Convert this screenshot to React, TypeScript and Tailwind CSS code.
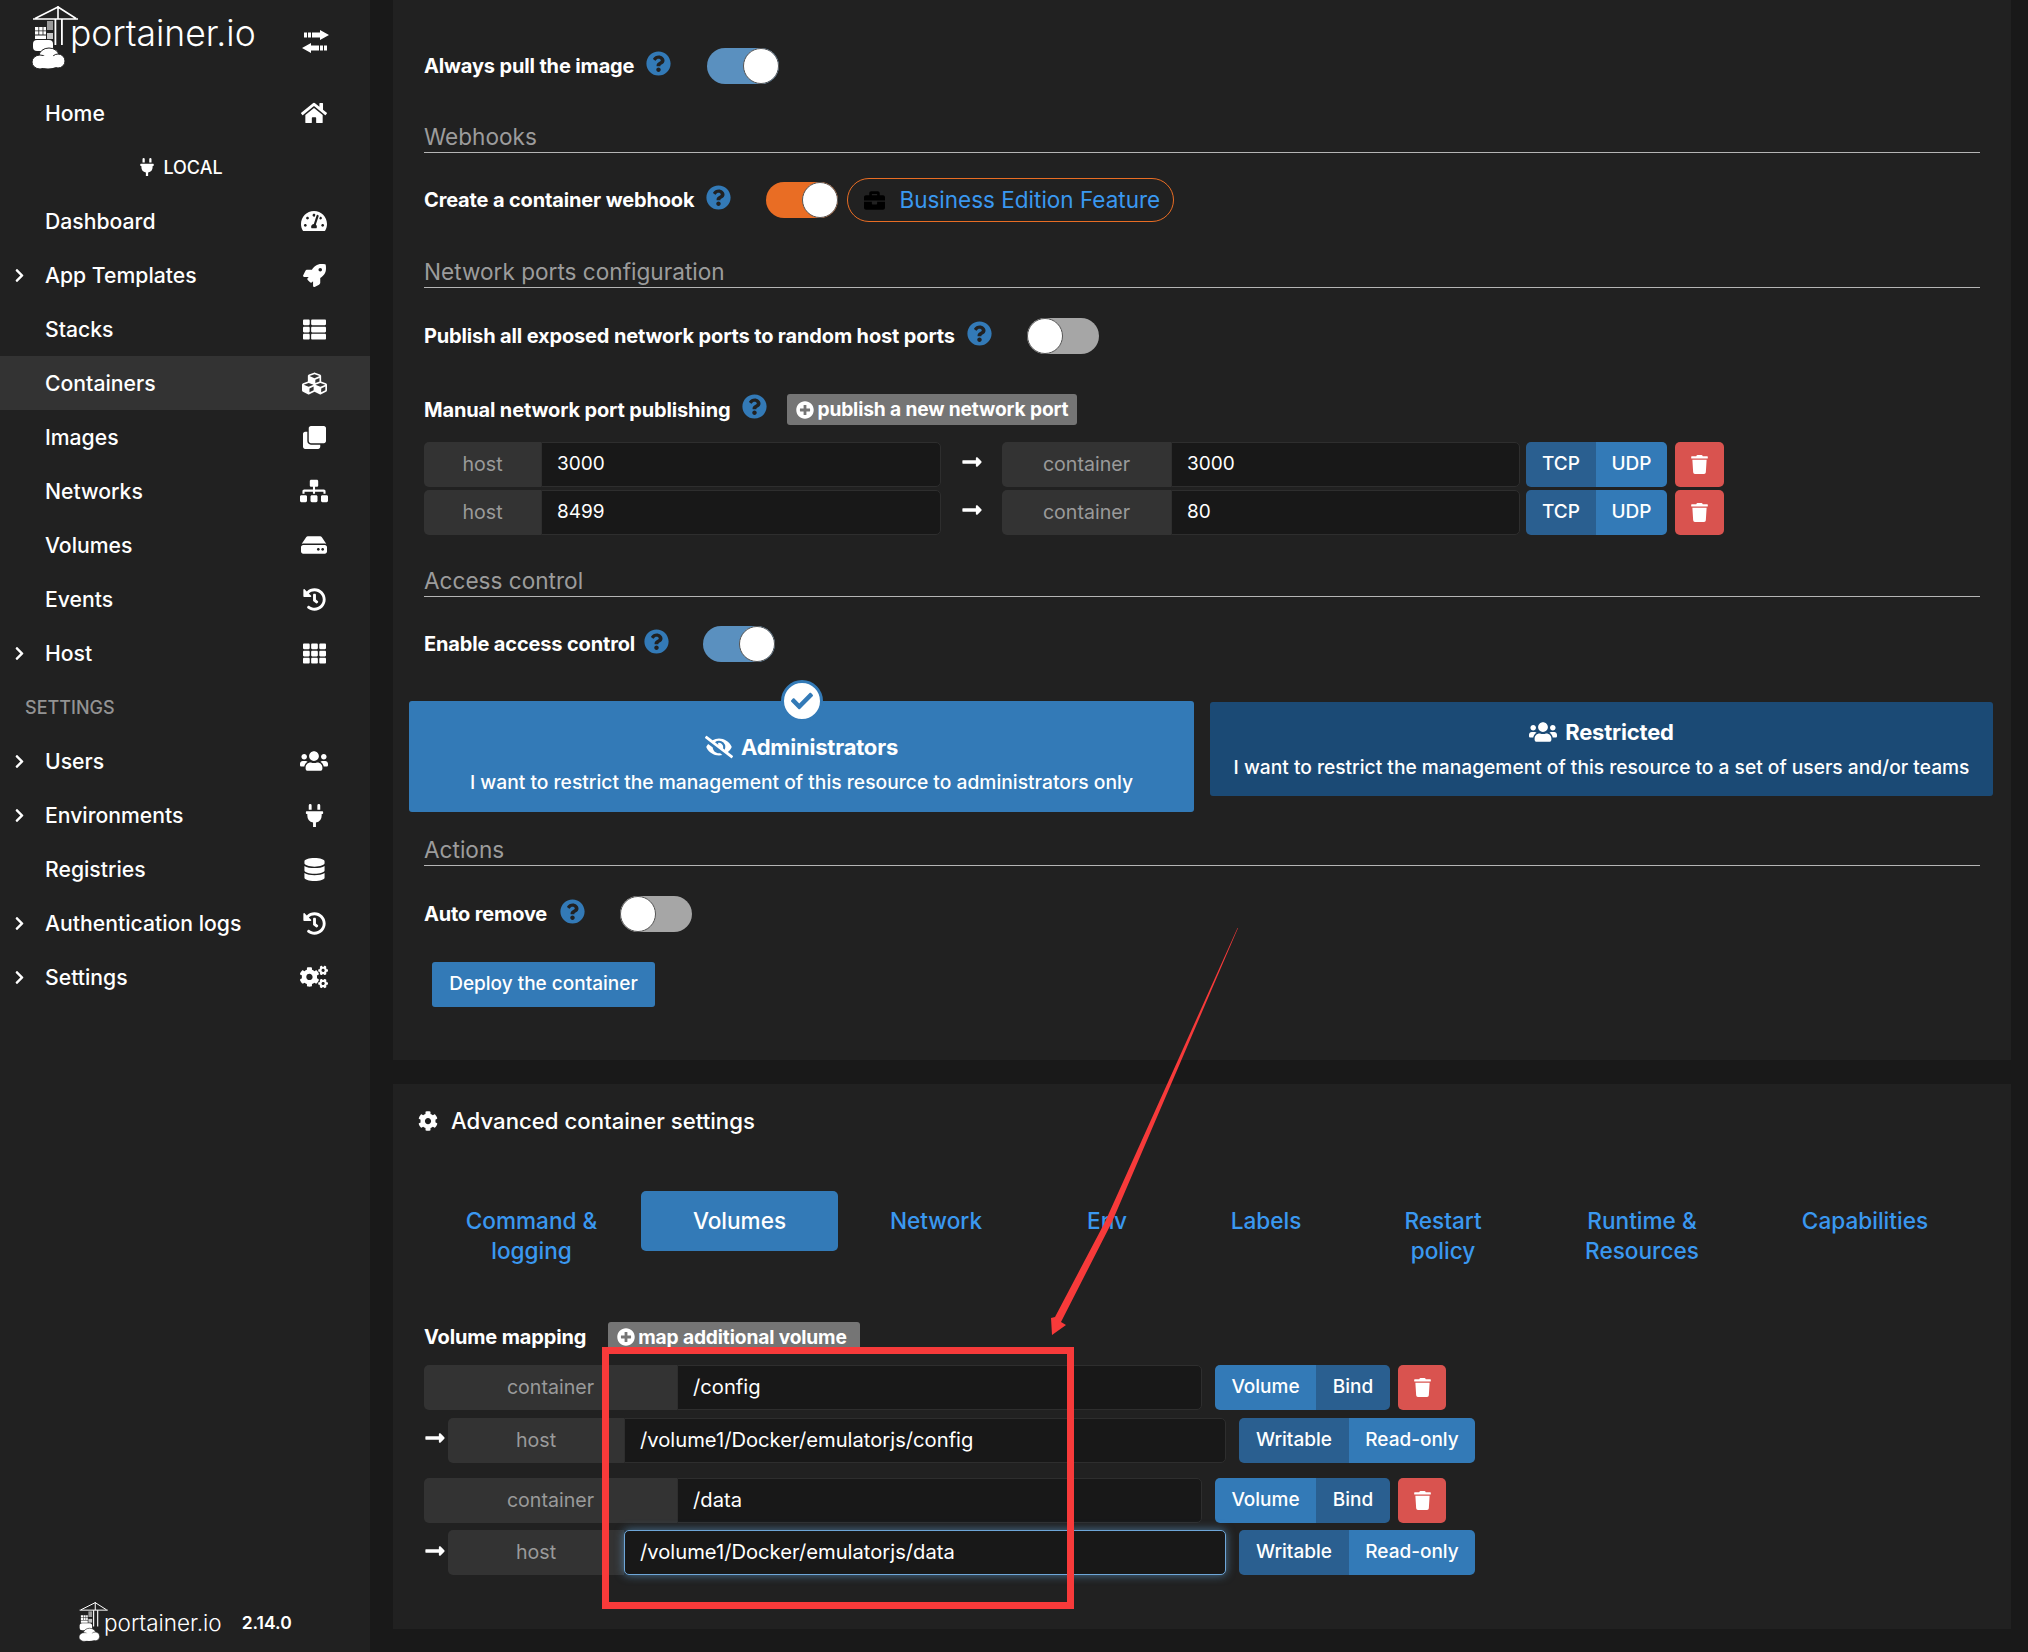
import type { ReactNode } from "react";
import {
  FaBriefcase, FaCheck, FaChevronRight, FaClone, FaCog, FaCogs, FaCubes, FaDatabase, FaEyeSlash,
  FaHdd, FaHistory, FaHome, FaLongArrowAltRight, FaPlug, FaPlusCircle, FaQuestionCircle, FaRocket, FaSitemap,
  FaTachometerAlt, FaTh, FaThList, FaTrash, FaUsers,
} from "react-icons/fa";

type NavItem = { label: string; icon: ReactNode; arrow?: boolean; active?: boolean };

const top: NavItem[] = [
  { label: "Dashboard", icon: <FaTachometerAlt className="text-[26px]" /> },
  { label: "App Templates", icon: <FaRocket />, arrow: true },
  { label: "Stacks", icon: <FaThList /> },
  { label: "Containers", icon: <FaCubes className="text-[25px]" />, active: true },
  { label: "Images", icon: <FaClone /> },
  { label: "Networks", icon: <FaSitemap className="text-[28px]" /> },
  { label: "Volumes", icon: <FaHdd className="text-[26px]" /> },
  { label: "Events", icon: <FaHistory /> },
  { label: "Host", icon: <FaTh />, arrow: true },
];
const bottom: NavItem[] = [
  { label: "Users", icon: <FaUsers className="text-[28px]" />, arrow: true },
  { label: "Environments", icon: <FaPlug />, arrow: true },
  { label: "Registries", icon: <FaDatabase /> },
  { label: "Authentication logs", icon: <FaHistory />, arrow: true },
  { label: "Settings", icon: <FaCogs className="text-[28px]" />, arrow: true },
];

const tabs = [
  { label: "Command & logging", w: "w-[215px]" },
  { label: "Volumes", w: "w-[197px]", active: true },
  { label: "Network", w: "w-[192px]" },
  { label: "Env", w: "w-[146px]" },
  { label: "Labels", w: "w-[168px]" },
  { label: "Restart policy", w: "w-[182px]" },
  { label: "Runtime & Resources", w: "w-[212px]" },
  { label: "Capabilities", w: "w-[230px]" },
];

const bold = "text-[20px] font-bold text-white tracking-[-0.15px]";
const small = "text-[19.2px] font-bold text-white tracking-[-0.15px] whitespace-nowrap";
const addon = "flex items-center justify-center bg-[#333333] text-[#9a9a9a] text-[19.6px] rounded-l-[5px]";
const input = "flex items-center bg-[#181818] border border-[#2e2e2e] rounded-r-[5px] text-white";
const btn = "flex items-center justify-center text-white text-[19px] font-medium";
const dark = "bg-[#2a5f90]";
const blue = "bg-[#337ab7]";

const Logo = ({ className }: { className: string }) => (
  <svg viewBox="0 0 48 64" className={className} fill="#fff">
    <path d="M26 0v13M1 13h45M26 1L3 12.5M26 1l18 11.5" stroke="#fff" strokeWidth="1.6" fill="none" />
    <path d="M22.5 13h1.8v26h-1.8zM29 13h1.8v26H29z" />
    <path d="M15 15h6v9h-6z" opacity=".55" />
    <path d="M3 21h3.4v3.4H3zM7.2 21h3.4v3.4H7.2zM11.4 21h2.6v3.4h-2.6zM3 25.2h3.4v3.4H3zM7.2 25.2h3.4v3.4H7.2zM11.4 25.2h2.6v3.4h-2.6zM3 29.4h11V33H3z" />
    <path d="M15 27h6v6h-6z" opacity=".75" />
    <rect x="1" y="34" width="20" height="11" rx="4" />
    <g stroke="#212121" strokeWidth="1">
      <ellipse cx="17" cy="50" rx="10" ry="8" />
      <ellipse cx="8" cy="56" rx="8" ry="7" />
      <ellipse cx="26" cy="55" rx="7" ry="7" />
    </g>
    <ellipse cx="16" cy="56" rx="13" ry="6.5" />
  </svg>
);

const Exchange = () => (
  <svg viewBox="0 0 27 23" className="w-[27px] h-[23px] ml-auto mr-[41px] mt-[24px]" fill="#fff">
    <path d="M18 0l9 5-9 5zM10 2.5h8v5h-8zM6 2.5h3v5H6zM2 2.5h3v5H2z" />
    <path d="M9 13l-9 5 9 5zM9 15.5h8v5H9zM18 15.5h3v5h-3zM22 15.5h3v5h-3z" />
  </svg>
);

const Help = () => <FaQuestionCircle className="text-[#337ab7] text-[25px] -mt-[6px]" />;

const Toggle = ({ on, tone = "bg-[#5a90bf]" }: { on?: boolean; tone?: string }) => (
  <div className={`flex w-[72px] h-[36px] rounded-full ${on ? `justify-end ${tone}` : "justify-start bg-[#a6a6a6]"}`}>
    <div className="w-[36px] h-[36px] rounded-full bg-white border border-[#555]" />
  </div>
);

const Section = ({ title, className }: { title: string; className: string }) => (
  <div className={`h-[33px] border-b border-[#b5b5b5] text-[#9c9c9c] text-[22.6px] leading-[33px] ${className}`}>{title}</div>
);

const Nav = ({ item }: { item: NavItem }) => (
  <div className={`flex items-center h-[54px] text-white text-[21.2px] font-medium ${item.active ? "bg-[#333333]" : ""}`}>
    <span className="w-[45px] pl-[12px] text-[15px]">{item.arrow && <FaChevronRight />}</span>
    <span className="flex-1 pt-[1px]">{item.label}</span>
    <span className="w-[40px] mr-[36px] flex justify-center text-[23px]">{item.icon}</span>
  </div>
);

const Trash = ({ className }: { className: string }) => (
  <div className={`${btn} bg-[#d9534f] rounded-[5px] text-[19px] ${className}`}><FaTrash /></div>
);

const Port = () => (
  <div className={`${btn} ml-[6px] rounded-[5px] overflow-hidden w-[141px] h-[45px]`}>
    <span className={`${dark} w-[70px] h-full flex items-center justify-center`}>TCP</span>
    <span className={`${blue} w-[71px] h-full flex items-center justify-center`}>UDP</span>
  </div>
);

const PortRow = ({ host, container, className }: { host: string; container: string; className?: string }) => (
  <div className={`flex h-[45px] ${className ?? ""}`}>
    <div className={`${addon} w-[117px]`}>host</div>
    <div className={`${input} w-[400px] pl-[15px] text-[19px]`}>{host}</div>
    <div className="w-[61px] flex justify-center pt-[9px] text-white text-[22px]"><FaLongArrowAltRight /></div>
    <div className={`${addon} w-[169px]`}>container</div>
    <div className={`${input} w-[349px] pl-[15px] text-[19px]`}>{container}</div>
    <Port />
    <Trash className="w-[49px] ml-[8px] h-[45px]" />
  </div>
);

const VolumeRows = ({ path, host, focus, className }: { path: string; host: string; focus?: boolean; className?: string }) => (
  <div className={className}>
    <div className="flex h-[45px]">
      <div className={`${addon} w-[253px]`}>container</div>
      <div className={`${input} w-[525px] pl-[15px] text-[20.2px]`}>{path}</div>
      <div className={`${btn} ml-[13px] rounded-[5px] overflow-hidden h-[45px]`}>
        <span className={`${blue} w-[101px] h-full flex items-center justify-center`}>Volume</span>
        <span className={`${dark} w-[74px] h-full flex items-center justify-center`}>Bind</span>
      </div>
      <Trash className="w-[48px] ml-[8px] h-[45px]" />
    </div>
    <div className={`flex h-[45px] ${focus ? "mt-[7px]" : "mt-[8px]"}`}>
      <div className={`w-[24px] flex text-white text-[22px] ${focus ? "pt-[10px]" : "pt-[9px]"}`}><FaLongArrowAltRight /></div>
      <div className={`${addon} w-[176px]`}>host</div>
      <div
        className={`${input} w-[602px] pl-[15px] text-[20.2px] ${focus ? "border-[#6ea6d8] rounded-[5px] shadow-[0_0_10px_rgba(102,175,233,0.6)]" : ""}`}
      >
        {host}
      </div>
      <div className={`${btn} ml-[13px] rounded-[5px] overflow-hidden h-[45px]`}>
        <span className={`${dark} w-[110px] h-full flex items-center justify-center`}>Writable</span>
        <span className={`${blue} w-[126px] h-full flex items-center justify-center`}>Read-only</span>
      </div>
    </div>
  </div>
);

export default function App() {
  return (
    <div className="relative flex w-[2028px] h-[1652px] overflow-hidden bg-[#191919] [font-family:Inter,sans-serif]">
      <aside className="flex flex-col shrink-0 w-[370px] h-full bg-[#212121]">
        <div className="flex h-[86px] pl-[32px] pt-[6px]">
          <Logo className="w-[48px] h-[64px]" />
          <span className="-ml-[10px] mt-[8px] h-[40px] leading-[40px] text-white text-[35.5px] font-light">portainer.io</span>
          <Exchange />
        </div>
        <Nav item={{ label: "Home", icon: <FaHome className="text-[26px]" /> }} />
        <div className="flex items-center justify-center h-[54px] pr-[9px] gap-[7px] text-white text-[18px] font-medium">
          <FaPlug className="text-[18px]" />
          <span>LOCAL</span>
        </div>
        {top.map((n) => <Nav key={n.label} item={n} />)}
        <div className="flex items-center h-[54px] pl-[25px] text-[#939393] text-[18px] font-medium">SETTINGS</div>
        {bottom.map((n) => <Nav key={n.label} item={n} />)}
        <div className="mt-auto mb-[10px] flex items-center pl-[79px]">
          <Logo className="w-[30px] h-[40px]" />
          <span className="-ml-[5px] mt-[2px] text-white text-[22.5px] font-light">portainer.io</span>
          <span className="ml-[20px] mt-[2px] text-white text-[17.5px] font-semibold">2.14.0</span>
        </div>
      </aside>

      <main className="flex-1 pl-[23px] pr-[18px]">
        <section className="h-[1060px] bg-[#212121] pl-[31px] pr-[31px] pt-[48px]">
          <div className="flex items-center h-[36px]">
            <span className={bold}>Always pull the image</span>
            <span className="ml-[12px]"><Help /></span>
            <span className="ml-[36px]"><Toggle on /></span>
          </div>

          <Section title="Webhooks" className="mt-[36px]" />

          <div className="flex items-center h-[44px] mt-[25px]">
            <span className={bold}>Create a container webhook</span>
            <span className="ml-[12px]"><Help /></span>
            <span className="ml-[35px]"><Toggle on tone="bg-[#e96d24]" /></span>
            <div className="flex items-center ml-[9px] w-[327px] h-[44px] pl-[16px] border border-[#e96d24] rounded-full">
              <FaBriefcase className="text-black text-[21px]" />
              <span className="ml-[14px] text-[#3a98f0] text-[22.5px]">Business Edition Feature</span>
            </div>
          </div>

          <Section title="Network ports configuration" className="mt-[33px]" />

          <div className="flex items-center h-[36px] mt-[30px]">
            <span className={bold}>Publish all exposed network ports to random host ports</span>
            <span className="ml-[12px]"><Help /></span>
            <span className="ml-[35px]"><Toggle /></span>
          </div>

          <div className="flex items-center h-[31px] mt-[40px]">
            <span className={bold}>Manual network port publishing</span>
            <span className="ml-[12px]"><Help /></span>
            <div className={`${small} flex items-center ml-[20px] h-[31px] px-[9px] gap-[3px] bg-[#757575] rounded-[3px]`}>
              <FaPlusCircle className="text-[18px]" />
              <span>publish a new network port</span>
            </div>
          </div>

          <PortRow host="3000" container="3000" className="mt-[17px]" />
          <PortRow host="8499" container="80" className="mt-[3px]" />

          <Section title="Access control" className="mt-[29px]" />

          <div className="flex items-center h-[36px] mt-[29px]">
            <span className={bold}>Enable access control</span>
            <span className="ml-[9px]"><Help /></span>
            <span className="ml-[34px]"><Toggle on /></span>
          </div>

          <div className="flex items-start gap-[16px] -ml-[15px] -mr-[14px] mt-[39px]">
            <div className="relative w-[785px] h-[111px] bg-[#337ab7] rounded-[3px] pt-[32px] text-center text-white">
              <div className="absolute -top-[21px] left-[372px] flex items-center justify-center w-[42px] h-[42px] rounded-full bg-white border-[3px] border-[#337ab7] text-[#337ab7] text-[22px]">
                <FaCheck />
              </div>
              <div className="flex items-center justify-center gap-[8px] h-[28px] text-[22px] font-bold tracking-[-0.2px]">
                <FaEyeSlash className="text-[28px]" />
                <span>Administrators</span>
              </div>
              <div className="mt-[7px] text-[19.25px] font-medium">I want to restrict the management of this resource to administrators only</div>
            </div>
            <div className="w-[783px] h-[94px] mt-[1px] bg-[#1b4a75] rounded-[3px] pt-[16px] text-center text-white">
              <div className="flex items-center justify-center gap-[8px] h-[28px] text-[22px] font-bold tracking-[-0.2px]">
                <FaUsers className="text-[28px]" />
                <span>Restricted</span>
              </div>
              <div className="mt-[7px] text-[19.2px] font-medium">I want to restrict the management of this resource to a set of users and/or teams</div>
            </div>
          </div>

          <Section title="Actions" className="mt-[21px]" />

          <div className="flex items-center h-[36px] mt-[30px]">
            <span className={bold}>Auto remove</span>
            <span className="ml-[13px]"><Help /></span>
            <span className="ml-[35px]"><Toggle /></span>
          </div>

          <div className={`${btn} ${blue} mt-[30px] ml-[8px] w-[223px] h-[45px] rounded-[3px]`}>Deploy the container</div>
        </section>

        <section className="h-[545px] mt-[24px] bg-[#212121] pl-[31px] pr-[31px]">
          <div className="flex items-center h-[74px] -ml-[6px] text-white text-[22.2px] font-medium">
            <FaCog className="text-[20px]" />
            <span className="ml-[13px]">Advanced container settings</span>
          </div>

          <div className="flex gap-[2px] mt-[33px] h-[91px]">
            {tabs.map((t) => (
              <div
                key={t.label}
                className={`${t.w} shrink-0 self-start rounded-[5px] px-[36px] py-[15px] text-center text-[22.6px] font-medium leading-[30px] ${
                  t.active ? "bg-[#337ab7] text-white" : "text-[#3a98f0]"
                }`}
              >
                {t.label}
              </div>
            ))}
          </div>

          <div className="flex items-center h-[30px] mt-[40px]">
            <span className={bold}>Volume mapping</span>
            <div className={`${small} flex items-center ml-[22px] h-[30px] w-[252px] px-[9px] gap-[3px] bg-[#757575] rounded-[3px]`}>
              <FaPlusCircle className="text-[18px]" />
              <span>map additional volume</span>
            </div>
          </div>

          <VolumeRows path="/config" host="/volume1/Docker/emulatorjs/config" className="mt-[13px]" />
          <VolumeRows path="/data" host="/volume1/Docker/emulatorjs/data" focus className="mt-[15px]" />
        </section>
      </main>

      {/* annotation drawn on top of the screenshot */}
      <div className="absolute left-[602px] top-[1347px] w-[472px] h-[262px] border-[7px] border-[#f73a3a] pointer-events-none" />
      <svg className="absolute left-0 top-0 pointer-events-none" width="2028" height="1652">
        <polygon points="1238,928 1112,1222 1061,1322 1066,1325 1052,1335 1051,1318 1055,1317 1105,1222 1237.5,928" fill="#f73a3a" />
      </svg>
    </div>
  );
}
